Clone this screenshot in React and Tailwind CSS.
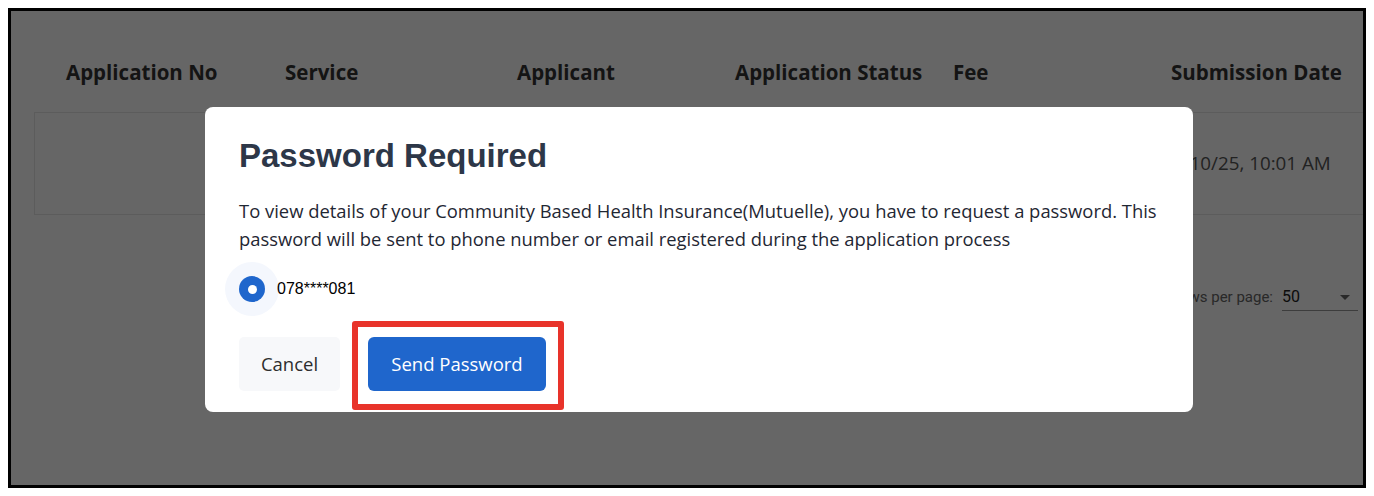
import React from "react";

const body = { fontFamily: "'Open Sans', Lato, sans-serif" };
const arial = { fontFamily: "'Liberation Sans', Arial, sans-serif" };
const roboto = { fontFamily: "Roboto, 'Liberation Sans', sans-serif" };

const cols = "grid grid-cols-[219px_232px_218px_218px_218px_1fr]";

export default function App() {
  return (
    <div className="w-[1374px] h-[496px] bg-white p-[8px]">
      <div className="relative w-[1358px] h-[480px] border-[3px] border-black bg-white overflow-hidden">
        {/* Underlying page */}
        <div className="pt-[46px]" style={body}>
          <div className="ml-[23px] w-[1400px]">
            <div className={`${cols} px-[32px] h-[28px] items-center text-[20.5px] font-bold text-[#333]`}>
              <div>Application No</div>
              <div>Service</div>
              <div>Applicant</div>
              <div>Application Status</div>
              <div>Fee</div>
              <div>Submission Date</div>
            </div>
            <div className={`${cols} mt-[27px] h-[103px] px-[32px] items-center border border-[#e6e6e6] text-[18.8px] text-[#555]`}>
              <div></div>
              <div></div>
              <div></div>
              <div></div>
              <div></div>
              <div>3/10/25, 10:01 AM</div>
            </div>
          </div>
          <div className="mt-[68px] flex justify-end pr-[5px] items-center h-[28px]" style={roboto}>
            <span className="text-[15px] text-[#666]">Rows per page:</span>
            <div className="ml-[9px] w-[76px] h-[28px] flex items-center justify-between border-b border-[#999] text-[16px] text-[#222]">
              <span>50</span>
              <svg width="24" height="24" viewBox="0 0 24 24" className="mr-[1px]">
                <path d="M7 10l5 5 5-5z" fill="#666" />
              </svg>
            </div>
          </div>
        </div>

        {/* Overlay + modal */}
        <div className="absolute inset-0 bg-black/60 pl-[194px] pt-[96px]">
          <div className="w-[988px] h-[305px] bg-white rounded-[8px] px-[34px] pt-[29px] pb-[21px]">
            <h2 className="h-[40px] leading-[40px] text-[33px] font-bold text-[#2d3748]" style={arial}>
              Password Required
            </h2>
            <p className="mt-[21px] text-[18.4px] leading-[28px] text-[#1f2733]" style={body}>
              To view details of your Community Based Health Insurance(Mutuelle), you have to request a password. This
              password will be sent to phone number or email registered during the application process
            </p>
            <div className="mt-[9px] flex items-center h-[54px]">
              <div className="-ml-[14px] w-[54px] h-[54px] rounded-full bg-[#f4f7fd] flex items-center justify-center">
                <div className="w-[26px] h-[26px] rounded-full bg-[#1f66cc] flex items-center justify-center">
                  <div className="w-[9px] h-[9px] rounded-full bg-white"></div>
                </div>
              </div>
              <span className="-ml-[2px] text-[16px] text-black" style={arial}>
                078****081
              </span>
            </div>
            <div className="mt-[21px] flex gap-[28px]" style={body}>
              <button className="w-[101px] h-[54px] rounded-[5px] bg-[#f7f8fa] text-[18.5px] text-[#2d2d2d]">
                Cancel
              </button>
              <div className="relative">
                <button className="w-[178px] h-[54px] rounded-[6px] bg-[#1f66cc] text-[18.5px] text-white">
                  Send Password
                </button>
                <div className="absolute -left-[16px] -top-[16px] -right-[18px] -bottom-[19px] border-[6px] border-[#e8332a] rounded-[3px]"></div>
              </div>
            </div>
          </div>
        </div>
      </div>
    </div>
  );
}
